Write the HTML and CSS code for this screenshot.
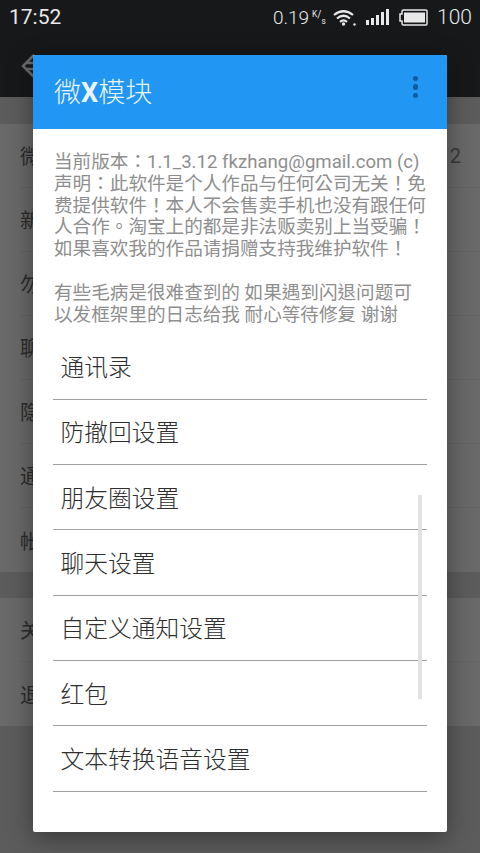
FILE: index.html
```html
<!DOCTYPE html>
<html lang="zh">
<head>
<meta charset="utf-8">
<title>微X模块</title>
<link rel="stylesheet" href="styles.css">
</head>
<body>
<div class="screen">
  <header class="status">
    <span class="clock">17:52</span>
    <div class="status-right">
      <span class="speed">0.19</span>
      <span class="unit"><sup>K</sup>/<sub>s</sub></span>
      <svg class="wifi" width="23" height="17" viewBox="0 0 23 17"><g fill="none" stroke="#e8e8e8" stroke-width="2.200"><path d="M1 6 Q10.500 -1.500 20 6"/><path d="M4 9.500 Q10.500 4 17 9.500"/><path d="M7 12.800 Q10.500 9.800 14 12.800"/></g><circle cx="10.500" cy="15" r="1.700" fill="#e8e8e8"/><circle cx="21.500" cy="15.500" r="1.200" fill="#e8e8e8"/></svg>
      <svg class="signal" width="24" height="16" viewBox="0 0 24 16"><g fill="#e8e8e8"><rect x="0" y="11" width="3" height="5"/><rect x="5" y="9" width="3" height="7"/><rect x="10" y="6" width="3" height="10"/><rect x="15" y="3" width="3" height="13"/><rect x="20" y="0" width="3" height="16"/></g></svg>
      <svg class="battery" width="29" height="17" viewBox="0 0 29 17"><path d="M1 5H3V2.500Q3 1 4.500 1H27Q28 1 28 2V15Q28 16 27 16H4.500Q3 16 3 14.500V12H1Z" fill="none" stroke="#e8e8e8" stroke-width="1.500"/><rect x="5" y="3.500" width="21" height="10" fill="#e8e8e8"/></svg>
      <span class="level">100</span>
    </div>
  </header>
  <div class="toolbar">
    <svg class="back" width="22" height="26" viewBox="0 0 22 26"><path d="M13 2 2 13l11 11M4 10h16M4 16h16" fill="none" stroke="#6a6a6a" stroke-width="2.500"/></svg>
  </div>
  <section class="list">
    <div class="row">微<span class="tail">2</span></div>
    <div class="row">新</div>
    <div class="row">勿</div>
    <div class="row">聊</div>
    <div class="row">隐</div>
    <div class="row">通</div>
    <div class="row last">帐</div>
  </section>
  <section class="list second">
    <div class="row">关</div>
    <div class="row last">退</div>
  </section>
</div>
<div class="dialog">
  <div class="dialog-head">
    <span class="dialog-title">微<b>X</b>模块</span>
    <span class="dots"><i></i><i></i><i></i></span>
  </div>
  <div class="dialog-body">
    <p class="notice" lang="zh-TW">当前版本：1.1_3.12 fkzhang@gmail.com (c) 声明：此软件是个人作品与任何公司无关！免费提供软件！本人不会售卖手机也没有跟任何人合作。淘宝上的都是非法贩卖别上当受骗！如果喜欢我的作品请捐赠支持我维护软件！</p>
    <p class="notice gap" lang="zh-TW">有些毛病是很难查到的 如果遇到闪退问题可以发框架里的日志给我 耐心等待修复 谢谢</p>
    <ul class="menu">
      <li>通讯录</li>
      <li>防撤回设置</li>
      <li>朋友圈设置</li>
      <li>聊天设置</li>
      <li>自定义通知设置</li>
      <li>红包</li>
      <li>文本转换语音设置</li>
    </ul>
    <div class="scrollbar"></div>
  </div>
</div>
</body>
</html>
```
FILE: styles.css
```css
* { box-sizing: border-box; }
html, body { margin: 0; padding: 0; }
body {
  width: 480px;
  height: 853px;
  overflow: hidden;
  position: relative;
  background: #5c5c5c;
  font-family: Roboto, "Noto Sans CJK SC", sans-serif;
}
.screen { display: flex; flex-direction: column; height: 853px; }
.status {
  height: 34px;
  background: #16181a;
  color: #e8e8e8;
  display: flex;
  justify-content: space-between;
  align-items: center;
  padding: 0 8px 0 9px;
}
.clock { font-size: 21px; }
.status-right { display: flex; align-items: center; }
.speed { font-size: 19px; font-weight: 300; }
.unit { font-size: 10px; margin: 0 7px 0 3px; display: flex; width: 14px; height: 17px; }
.unit sup { align-self: flex-start; }
.unit sub { align-self: flex-end; }
.signal { margin-left: 10px; }
.battery { margin-left: 9px; }
.level { font-size: 21px; font-weight: 300; margin-left: 9px; }
.toolbar { height: 63px; background: #16181a; display: flex; align-items: center; padding-left: 21px; }
.list { margin-top: 27px; background: #696969; padding-left: 20px; color: #2c2c2c; font-size: 20px; }
.second { margin-top: 26px; }
.row {
  height: 64px;
  display: flex;
  align-items: center;
  justify-content: space-between;
  padding-right: 19px;
  border-bottom: 1px solid #646464;
}
.row.last { border-bottom: 0; }
.tail { color: #3a3a3a; }
.dialog {
  position: absolute;
  left: 33px;
  top: 55px;
  width: 414px;
  height: 777px;
  background: #fff;
  border-radius: 2px;
  overflow: hidden;
  box-shadow: 0 6px 26px rgba(0, 0, 0, .4);
}
.dialog-head {
  height: 74px;
  background: #2196f3;
  color: #eaf5fe;
  display: flex;
  align-items: center;
  justify-content: space-between;
  padding: 0 29px 4px 21px;
}
.dialog-title { font-size: 27px; font-weight: 300; }
.dialog-title b { font-family: Roboto, sans-serif; font-weight: 700; }
.dots { display: flex; flex-direction: column; gap: 3px; margin-top: -6px; }
.dots i { width: 5.500px; height: 5.500px; border-radius: 50%; background: #0d5ca0; display: block; }
.dialog-body { position: relative; padding: 23px 20px 0 21px; }
.notice {
  margin: 0;
  font-family: Roboto, "Noto Sans CJK TC", sans-serif;
  font-size: 18.600px;
  line-height: 21.800px;
  color: #8e8e8e;
}
.notice.gap { margin-top: 21.800px; }
.menu { list-style: none; margin: 8px 0 0 -1px; padding: 0; }
.menu li {
  height: 65.330px;
  border-bottom: 1.500px solid #a0a0a0;
  color: #2e2e2e;
  font-size: 23.750px;
  font-weight: 300;
  padding: 0 0 2px 7.500px;
  display: flex;
  align-items: center;
}
.scrollbar {
  position: absolute;
  right: 25px;
  top: 366px;
  width: 4.500px;
  height: 204px;
  background: #e2e2e2;
}
```
